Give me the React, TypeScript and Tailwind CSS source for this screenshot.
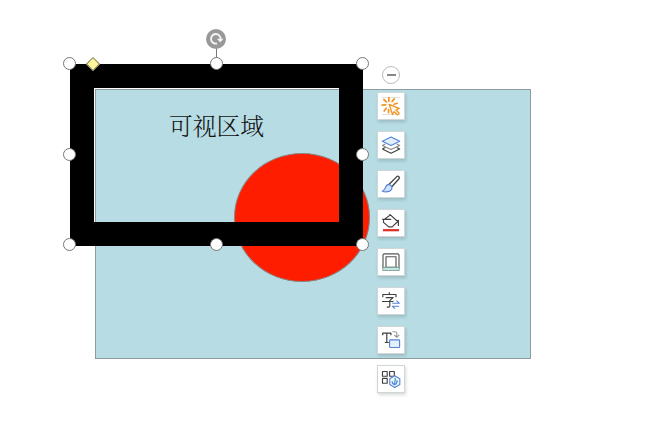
import type { ReactNode } from "react";

const handles = [
  "left-[63px] top-[57px]",
  "left-[210px] top-[57px]",
  "left-[356px] top-[57px]",
  "left-[63px] top-[148px]",
  "left-[356px] top-[148px]",
  "left-[63px] top-[238px]",
  "left-[210px] top-[238px]",
  "left-[356px] top-[238px]",
];

function Icon({ children }: { children: ReactNode }) {
  return (
    <svg viewBox="0 0 20 20" className="size-5" fill="none" stroke="#404040" strokeWidth="1.15" strokeLinejoin="round">
      {children}
    </svg>
  );
}

function EffectsIcon() {
  return (
    <Icon>
      <path d="M1 1.5h18M1 18.5h18" stroke="#ddd2cc" strokeWidth=".7" />
      <g stroke="#f39422" strokeWidth="1.7" strokeLinecap="round">
        <path d="M7.8 1.7v3.6M2.9 3.5l2.5 2.3M1.1 9.2l3.6-.3M5.2 12.2l-2 2.9M7.6 13.6v3M11 5.6l2.3-2.7M13 8.2l3.2-.9" />
        <path d="m8.2 8.4 10 4-3.2 1.6 3.2 3.3-1.8 1.6-3.2-3.2-1.7 2.8z" strokeWidth="1.3" fill="#fff8ed" />
      </g>
    </Icon>
  );
}

function LayersIcon() {
  return (
    <Icon>
      <path d="m1.3 14 8.7 4.2 8.7-4.2-3-1.4M1.3 14l3-1.4" />
      <path d="m1.3 10.4 8.7 4.1 8.7-4.1-3-1.4M1.3 10.4l3-1.4" stroke="#888" />
      <path d="M10 2 18.7 6.2 10 10.4 1.3 6.2z" stroke="#5584d4" fill="#e1efff" />
    </Icon>
  );
}

function BrushIcon() {
  return (
    <Icon>
      <path d="M8.2 10.3 15.8 2.6c1.4-1.2 3.5.8 2.2 2.2l-7.2 8" strokeWidth="1.3" />
      <path d="M8 10.4c-2 .1-3 1.4-3.5 3-.5 1.9-1.5 2.9-3.2 3.8 3.2 1.1 7.8.8 9.2-1.8 1-2 .2-4.2-2.5-5z" stroke="#5584d4" fill="#cfe3ff" />
    </Icon>
  );
}

function FillIcon() {
  return (
    <Icon>
      <path d="M1.2 6.3h9M3.6 6.3l5.8-4.4 7.3 6.6-5.5 5.4H7.7L2.5 9.4V6.5M8.3 1.5l1.1.4M15.8 7.8l1.6-.5v5.6" />
      <path d="M2 17.2h16" stroke="#dd2d22" strokeWidth="2.2" />
    </Icon>
  );
}

function FrameIcon() {
  return (
    <Icon>
      <path d="M2 15.5V3.2C2 2.3 2.6 1.8 3.4 1.8h13.2c.8 0 1.4.5 1.4 1.4v12.3zM5 15.2V4.7h10v10.5z" stroke="#555" />
      <path d="M1.7 15.3h16.6v3.2H1.7z" fill="#c2e7e0" stroke="#78928e" strokeWidth=".8" />
    </Icon>
  );
}

function ConvertTextIcon() {
  return (
    <Icon>
      <path d="M8.3 1.2v2.3M1.8 6.2V3.5H15v2.7M4.7 6.6h7.4L8.8 9.7v5c0 1.2-.6 1.5-3 1.4M1 10.5h11.5" />
      <path d="M11.2 12.2h7l-2.7-2.5M18.2 15.2h-7l2.7 2.5" stroke="#5584d4" />
    </Icon>
  );
}

function TextShapeIcon() {
  return (
    <Icon>
      <path d="M1.7 5.2V3.1h8.2v2.1M5.8 3.1v9.4M3.8 12.5h4" strokeWidth="1.2" />
      <path d="M11.5 1.7h2.3c1.3 0 2 .8 2 2v3.2M13.2 4.8l2.6 2.5 2.5-2.5" stroke="#999" />
      <rect x="8.6" y="9.8" width="10" height="7.7" rx=".8" stroke="#5584d4" fill="#e4f0ff" />
    </Icon>
  );
}

function ComponentsIcon() {
  return (
    <Icon>
      <path d="M1.5 2.5h4.7v4.7H1.5zM8.6 2.5h4.7v4.7H8.6zM1.5 9.4h4.7v4.8H1.5z" />
      <path d="m13.8 6.8 5 2.9v5.8l-5 2.9-5-2.9V9.7z" stroke="#5584d4" fill="#eff7ff" />
      <path d="M14.1 8.9c.5 2-.5 3.7-.5 6.9M11.2 12.2c-.2 1.8.8 2.8 2.4 3.6 1.7-.8 2.7-2.3 2.5-4.5" stroke="#4888d8" strokeWidth="1.2" />
    </Icon>
  );
}

const tools = [
  EffectsIcon,
  LayersIcon,
  BrushIcon,
  FillIcon,
  FrameIcon,
  ConvertTextIcon,
  TextShapeIcon,
  ComponentsIcon,
];

export default function App() {
  return (
    <main className="relative h-[434px] w-[645px] overflow-hidden bg-white">
      <section className="absolute left-[95px] top-[89px] h-[270px] w-[436px] border border-[#8d9d9f] bg-[#b7dce3]" />
      <div className="absolute left-[233.5px] top-[153px] h-[129px] w-[136.5px] rounded-[50%] border border-[#8a8583] bg-[#ff1d00]" />
      <div className="absolute left-[70px] top-[64px] h-[182px] w-[293px] border-[24px] border-black">
        <div className="h-full w-full border-l border-t border-white" />
      </div>
      <h1 className="absolute left-[169px] top-[109px] whitespace-nowrap font-['Noto_Serif_CJK_SC','Noto_Sans_CJK_SC',sans-serif] text-[23.75px] leading-8 font-light text-[#111]">
        可视区域
      </h1>

      <div className="absolute left-[216px] top-[47px] h-3 w-px bg-[#777]" />
      <div className="absolute left-[206px] top-[29px] flex size-[20px] items-center justify-center rounded-full bg-[#999]">
        <svg viewBox="0 0 20 20" className="size-5" fill="none">
          <path d="M11 14.5A4.8 4.8 0 1 1 14.6 10" stroke="#f4f4f4" strokeWidth="1.9" />
          <path d="M11 9.8h6.5l-3.3 3.7z" fill="#f4f4f4" />
        </svg>
      </div>
      <div className="absolute left-[88px] top-[59px] size-[10px] rotate-45 border border-[#858065] bg-[#fff69b]" />
      {handles.map((position) => (
        <span key={position} className={`absolute size-[13px] rounded-full border border-[#777] bg-white ${position}`} />
      ))}

      <aside className="absolute left-[377px] top-[66px] flex w-7 flex-col items-center gap-2">
        <button aria-label="Collapse" className="flex size-[18px] items-center justify-center rounded-full border border-[#bbb] bg-white">
          <span className="h-[2px] w-[9px] bg-[#888]" />
        </button>
        <div className="flex flex-col gap-[11px]">
          {tools.map((Tool, index) => (
            <button key={index} className="flex size-7 items-center justify-center border border-[#d0d7d9] bg-white shadow-[1px_2px_3px_#00000026]">
              <Tool />
            </button>
          ))}
        </div>
      </aside>
    </main>
  );
}
